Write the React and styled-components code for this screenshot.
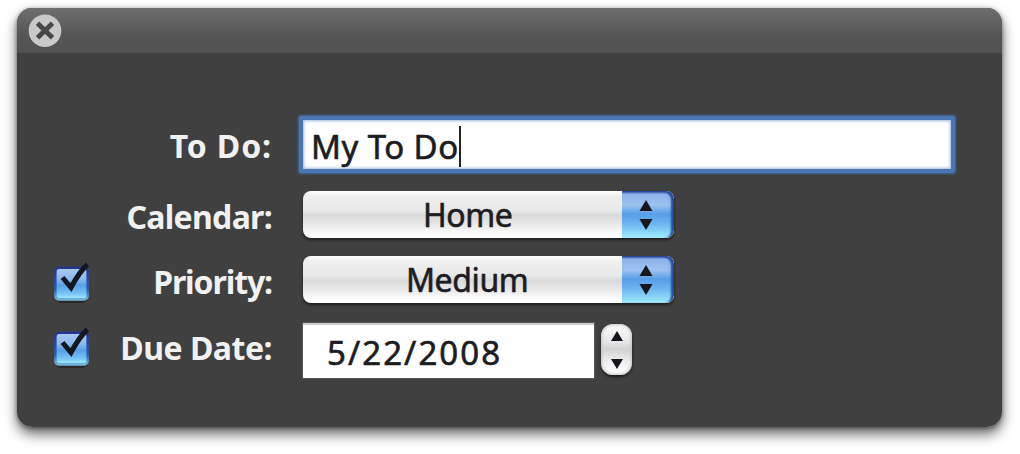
import { useState } from "react";
import styled, { createGlobalStyle } from "styled-components";

const GlobalStyle = createGlobalStyle`
  * {
    box-sizing: border-box;
  }

  body {
    margin: 0;
    background: #fff;
    overflow: hidden;
    font-family: "Noto Sans", "Open Sans", sans-serif;
  }
`;

const Page = styled.div`
  height: 454px;
  padding: 8px 18px 27px 17px;
`;

const Panel = styled.div`
  height: 419px;
  display: flex;
  flex-direction: column;
  overflow: hidden;
  border-radius: 15px;
  background: #404040;
`;

const Shadow = styled.div`
  border-radius: 15px;
  box-shadow: 0 7px 13px rgba(0, 0, 0, 0.6), 0 1px 4px rgba(0, 0, 0, 0.4);
`;

const TitleBar = styled.div`
  flex: none;
  height: 45px;
  padding: 6px 11px;
  background: linear-gradient(#707070 0, #6a6a6a 5px, #555 27px, #525252 100%);
`;

const CloseButton = styled.button`
  display: block;
  width: 34px;
  height: 34px;
  padding: 0;
  border: 0;
  background: none;
`;

const Body = styled.div`
  display: flex;
  flex-direction: column;
  padding: 67px 0 0 36px;
`;

const Row = styled.div`
  display: flex;
  align-items: flex-start;
  height: ${(props) => props.$height}px;
  margin-bottom: ${(props) => props.$gap}px;
`;

const CheckSlot = styled.div`
  width: 38px;
  flex: none;
  padding-top: ${(props) => props.$top}px;
`;

const CheckButton = styled.button`
  display: block;
  width: 38px;
  height: 44px;
  padding: 0;
  border: 0;
  background: none;
`;

const Label = styled.label`
  width: 181px;
  flex: none;
  margin-right: 31px;
  padding-top: ${(props) => props.$top}px;
  color: #f1f1f1;
  font-size: 32px;
  font-weight: 700;
  line-height: 44px;
  letter-spacing: ${(props) => props.$spacing}px;
  text-align: right;
  white-space: nowrap;
`;

const TextField = styled.div`
  display: flex;
  width: ${(props) => props.$width}px;
  height: ${(props) => props.$height}px;
  padding: ${(props) => props.$padding};
  background: #fff;
  color: #1c1c22;
  font-size: 33px;
  line-height: 44px;
  letter-spacing: ${(props) => props.$spacing}px;
  -webkit-text-stroke: 0.6px #1c1c22;
  white-space: nowrap;
  border-top: ${(props) => (props.$focused ? "0" : "2px solid #c9c9c9")};
  border-radius: ${(props) => (props.$focused ? "1px" : "0")};
  box-shadow: ${(props) =>
    props.$focused
      ? "inset 0 0 3px 1px #9db9df, 0 0 0 4px #4a76b4, 0 0 2px 5px #436a9f"
      : "0 0 1px 1px #555"};
`;

const Caret = styled.span`
  width: 2px;
  height: 41px;
  margin-top: 1px;
  background: #222;
`;

const Popup = styled.div`
  display: flex;
  width: 371px;
  height: 47px;
  overflow: hidden;
  border-radius: 8px;
  background: linear-gradient(#fff 0, #f0f0f0 5px, #e8e8e8 20px, #d9d9d9 24px, #e9e9e9 34px, #fff 44px);
  box-shadow: 0 2px 3px rgba(0, 0, 0, 0.55);
`;

const PopupValue = styled.div`
  width: 319px;
  flex: none;
  padding-left: ${(props) => props.$left}px;
  padding-top: ${(props) => props.$top}px;
  color: #1c1c22;
  font-size: 32px;
  line-height: 44px;
  letter-spacing: ${(props) => props.$spacing}px;
  -webkit-text-stroke: 0.6px #1c1c22;
`;

const PopupArrows = styled.div`
  display: flex;
  flex: 1;
  align-items: center;
  padding-left: 16px;
  border-radius: 0 8px 8px 0;
  background: linear-gradient(#2a3f9c 0, #8bb4ea 3px, #9cc3f0 14px, #579ee6 23px, #67b0f0 31px, #8fdcfa 43px, #a9eafa 47px);
  box-shadow: inset -3px 1px 2px #244a9e;
`;

const Stepper = styled.div`
  display: flex;
  justify-content: center;
  align-items: center;
  width: 31px;
  height: 51px;
  margin: 1px 0 0 7px;
  border-radius: 12px;
  background: linear-gradient(#fdfdfd, #e6e6e6 35%, #d2d2d2 50%, #ebebeb 70%, #fff);
  box-shadow: inset 0 0 3px 1px #c4c4c4, 0 2px 3px rgba(0, 0, 0, 0.6);
`;

const CloseIcon = () => (
  <svg width="34" height="34" viewBox="0 0 34 34">
    <circle cx="17" cy="16.7" r="16.3" fill="#c9c9c9" />
    <path d="M9.5 9.2L24.5 23.8M24.5 9.2L9.5 23.8" stroke="#484848" strokeWidth="4.8" />
  </svg>
);

const CheckIcon = () => (
  <svg width="38" height="44" viewBox="0 0 38 44">
    <defs>
      <linearGradient id="check-fill" x1="0" y1="0" x2="0" y2="1">
        <stop offset="0" stopColor="#a9c9f3" />
        <stop offset="0.35" stopColor="#8db9ee" />
        <stop offset="0.55" stopColor="#58a0e8" />
        <stop offset="0.8" stopColor="#74c2f5" />
        <stop offset="1" stopColor="#a6f0ff" />
      </linearGradient>
      <linearGradient id="check-edge" x1="0" y1="0" x2="0" y2="1">
        <stop offset="0" stopColor="#25378c" />
        <stop offset="0.7" stopColor="#2d5da8" />
        <stop offset="1" stopColor="#70b5d8" />
      </linearGradient>
    </defs>
    <rect x="3" y="8" width="32" height="33" rx="5" fill="#292929" />
    <rect x="2.3" y="5.8" width="32.4" height="31.6" rx="4" fill="url(#check-fill)" stroke="url(#check-edge)" strokeWidth="2.6" />
    <path d="M9.5 15.5L18 25.5C22 18 27 9 34.5 2.5" fill="none" stroke="#15171f" strokeWidth="5" />
  </svg>
);

// small black triangles shared by popups and the stepper
const Arrows = ({ width, height, half, tall }) => (
  <svg width={width} height={height} viewBox={`0 0 ${width} ${height}`}>
    <path d={`M${width / 2} 0L${width / 2 + half} ${tall}H${width / 2 - half}Z`} fill="#15151b" />
    <path d={`M${width / 2} ${height}L${width / 2 + half} ${height - tall}H${width / 2 - half}Z`} fill="#15151b" />
  </svg>
);

const CheckBox = ({ checked, onToggle }) => (
  <CheckButton type="button" onClick={onToggle}>
    {checked && <CheckIcon />}
  </CheckButton>
);

const Select = ({ value, left, top, spacing }) => (
  <Popup>
    <PopupValue $left={left} $top={top} $spacing={spacing}>{value}</PopupValue>
    <PopupArrows>
      <Arrows width={16} height={30} half={6.5} tall={11} />
    </PopupArrows>
  </Popup>
);

function App() {
  const [hasPriority, setHasPriority] = useState(true);
  const [hasDueDate, setHasDueDate] = useState(true);

  return (
    <Page>
      <GlobalStyle />
      <Shadow>
        <Panel>
          <TitleBar>
            <CloseButton type="button">
              <CloseIcon />
            </CloseButton>
          </TitleBar>
          <Body>
            <Row $height={49} $gap={22}>
              <CheckSlot />
              <Label $top={4} $spacing={0.9}>To Do:</Label>
              <TextField $focused $width={648} $height={49} $padding="5px 0 0 8px" $spacing={0.45}>
                My To Do
                <Caret />
              </TextField>
            </Row>
            <Row $height={47} $gap={18}>
              <CheckSlot />
              <Label $top={4} $spacing={-0.7}>Calendar:</Label>
              <Select value="Home" left={120} top={2} spacing={-0.4} />
            </Row>
            <Row $height={47} $gap={20}>
              <CheckSlot $top={6}>
                <CheckBox checked={hasPriority} onToggle={() => setHasPriority(!hasPriority)} />
              </CheckSlot>
              <Label $top={4} $spacing={-1.1}>Priority:</Label>
              <Select value="Medium" left={103} top={2} spacing={-0.4} />
            </Row>
            <Row $height={55} $gap={0}>
              <CheckSlot $top={4}>
                <CheckBox checked={hasDueDate} onToggle={() => setHasDueDate(!hasDueDate)} />
              </CheckSlot>
              <Label $top={3} $spacing={-0.5}>Due Date:</Label>
              <TextField $width={291} $height={55} $padding="6px 0 0 24px" $spacing={2.05}>
                5/22/2008
              </TextField>
              <Stepper>
                <Arrows width={16} height={38} half={6} tall={10} />
              </Stepper>
            </Row>
          </Body>
        </Panel>
      </Shadow>
    </Page>
  );
}

export default App;
